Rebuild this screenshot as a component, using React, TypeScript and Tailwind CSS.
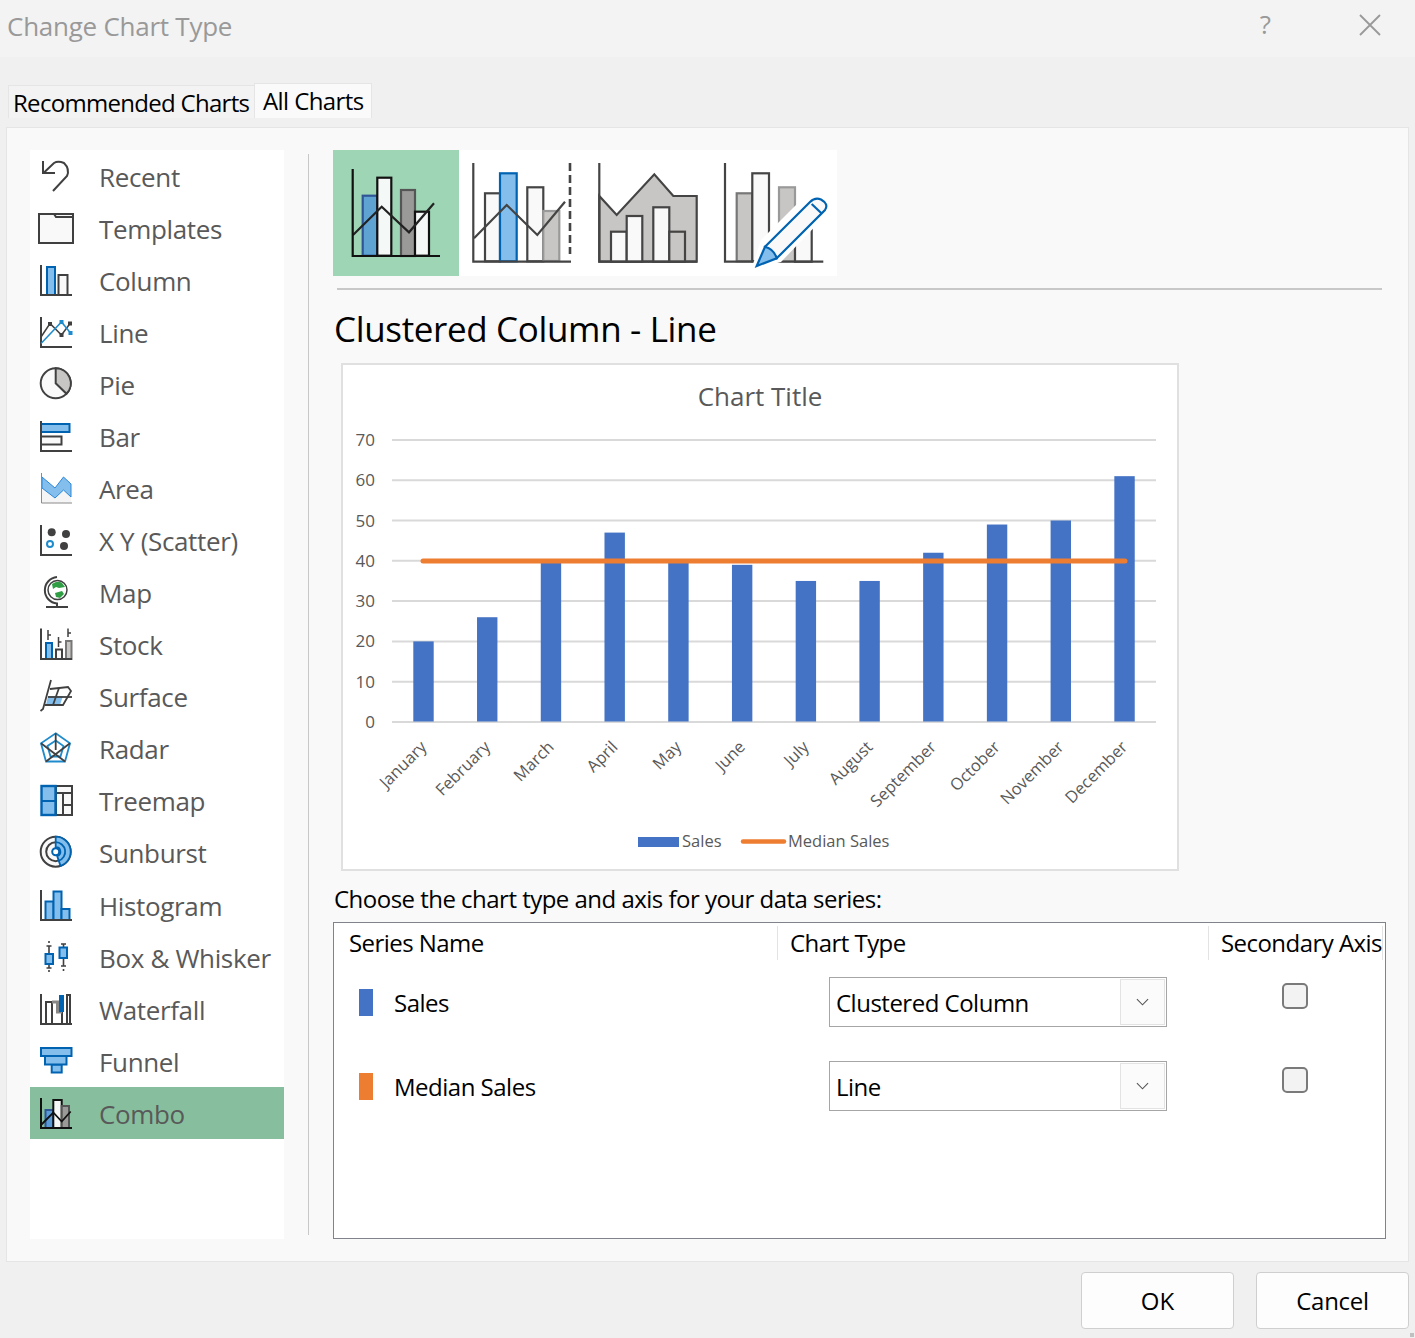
import React from 'react';

const DARK = '#404040';
const BLUE = '#0063b1';
const SKY = '#83beec';
const GRAY = '#c8c6c4';
const PALE = '#f9f9f9';

// bar with the bottom sitting on the axis
function Bar({ x1, x2, top, bottom = 33, fill = PALE, stroke = DARK, sw = 2 }: { x1: number; x2: number; top: number; bottom?: number; fill?: string; stroke?: string; sw?: number }) {
  return <rect x={x1} y={top} width={x2 - x1} height={bottom - top} fill={fill} stroke={stroke} strokeWidth={sw} />;
}

function Axis({ top = 3, color = DARK }: { top?: number; color?: string }) {
  return <path d={`M3 ${top} V33 H34`} fill="none" stroke={color} strokeWidth="2" />;
}

const icons: Record<string, React.ReactNode> = {
  Recent: (
    <g fill="none" stroke={DARK} strokeWidth="2">
      <path d="M5 3 V15 H17" />
      <path d="M5.5 15 L16 5 Q20 2.5 26 5 Q32 11 29 18 L15 33" />
    </g>
  ),
  Templates: (
    <g stroke={DARK} strokeWidth="2" fill={PALE}>
      <rect x="1" y="4" width="34" height="29" />
      <path d="M1 4 H16 L18 7 H35" />
    </g>
  ),
  Column: (
    <>
      <Bar x1={9} x2={17} top={5} fill={SKY} stroke={BLUE} />
      <Bar x1={20.5} x2={29.5} top={13} />
      <Axis />
    </>
  ),
  Line: (
    <>
      <Axis />
      <path d="M3 23 L12 9.5 L23.5 21 L32 9.5" fill="none" stroke={DARK} strokeWidth="1.5" />
      <rect x="10" y="8" width="4" height="4" fill={DARK} />
      <rect x="21.5" y="19" width="4" height="4" fill={DARK} />
      <rect x="30" y="7.5" width="4" height="4" fill={DARK} />
      <path d="M3 29.5 L23.5 8 L32.5 19" fill="none" stroke="#1e8bcd" strokeWidth="1.5" />
      <rect x="21.5" y="6" width="4" height="4" fill="#1e8bcd" />
      <rect x="30.5" y="17" width="4" height="4" fill="#1e8bcd" />
    </>
  ),
  Pie: (
    <>
      <circle cx="17.7" cy="17.3" r="15" fill={PALE} stroke={DARK} strokeWidth="2" />
      <path d="M17.7 2.3 A15 15 0 0 1 28.5 27.8 L17.7 17.3 Z" fill={GRAY} stroke={DARK} strokeWidth="2" />
    </>
  ),
  Bar: (
    <>
      <Bar x1={3} x2={31.5} top={6} bottom={14} fill={SKY} stroke={BLUE} />
      <Bar x1={3} x2={23.5} top={18.5} bottom={26.5} />
      <Axis />
    </>
  ),
  Area: (
    <>
      <path d="M4 18 L17 28 L25.5 20 L33 27 V33 H4 Z" fill="#f5f5f5" />
      <path d="M4 7 L17 18 L25.5 7 L33 14 V27 L25.5 20 L17 28 L4 18 Z" fill={SKY} stroke="#2b88d8" strokeWidth="1" />
      <path d="M3.5 3 V33 H34" fill="none" stroke="#8a8a8a" strokeWidth="1" />
    </>
  ),
  'X Y (Scatter)': (
    <>
      <Axis />
      <circle cx="13.7" cy="10.3" r="4" fill={DARK} />
      <circle cx="28" cy="12" r="4" fill={DARK} />
      <circle cx="26" cy="24" r="4" fill={DARK} />
      <circle cx="12" cy="22" r="3" fill="#fff" stroke="#1e8bcd" strokeWidth="2" />
    </>
  ),
  Map: (
    <>
      <circle cx="19.5" cy="16" r="9.5" fill="#fff" stroke={DARK} strokeWidth="1.5" />
      <path d="M14 10 Q20 6 24 9 L27 13 L21 14 L18 13 L15 15 Z" fill="#2f9e44" />
      <path d="M17 19 L24 17 L26 20 L22 24 L18 23 Z" fill="#2f9e44" />
      <path d="M19 3 A13.3 13.3 0 0 0 19 29.5 V33" fill="none" stroke={DARK} strokeWidth="2" />
      <path d="M8 33 H30" stroke={DARK} strokeWidth="2" />
    </>
  ),
  Stock: (
    <>
      <Bar x1={8} x2={14} top={17} fill={SKY} stroke={BLUE} />
      <Bar x1={18} x2={24} top={23.5} />
      <Bar x1={28} x2={33.5} top={15} fill={GRAY} stroke="#777" />
      <path d="M10 4 V14 M10 9 H13 M20.5 11 V21 M20.5 16 H23.5 M30 2.5 V11 M30 7 H33" stroke={DARK} strokeWidth="1.5" fill="none" />
      <Axis top={2.5} />
    </>
  ),
  Surface: (
    <>
      <path d="M10 18 H25 L22 27 H8 Z" fill={SKY} />
      <g fill="none" stroke={DARK} strokeWidth="1.8">
        <path d="M13 2 L5 31 L2.5 33" />
        <path d="M12 11 L30 9 L33 13 L25 27 H7" />
        <path d="M10 19 H34" />
        <path d="M21 10 L15 27" />
      </g>
    </>
  ),
  Radar: (
    <>
      <g fill="none" stroke="#1e8bcd" strokeWidth="1.8">
        <path d="M17.7 3.3 L32 13.3 L27 31.5 H8 L3 13.3 Z" />
        <path d="M17.7 10.5 L25.5 16 L22.5 26.5 H12.5 L9.5 16 Z" />
      </g>
      <path d="M17.7 3.3 V20 M3 13.3 L27 31.5 M32 13.3 L8 31.5" stroke={DARK} strokeWidth="1.8" fill="none" />
    </>
  ),
  Treemap: (
    <>
      <rect x="18" y="4" width="16" height="29" fill={PALE} stroke={DARK} strokeWidth="2" />
      <path d="M18 11 H34 M25 11 V33 M25 23 H34" stroke={DARK} strokeWidth="2" fill="none" />
      <rect x="3.5" y="4" width="14" height="29" fill={SKY} stroke={BLUE} strokeWidth="2.4" />
      <path d="M3.5 19 H17.5" stroke={BLUE} strokeWidth="2" />
    </>
  ),
  Sunburst: (
    <>
      <circle cx="17.7" cy="17.7" r="15" fill={PALE} stroke={DARK} strokeWidth="2" />
      <circle cx="17.7" cy="17.7" r="9.5" fill="none" stroke={DARK} strokeWidth="2" />
      <path d="M17.7 2.7 A15 15 0 0 1 22.5 31.9 L19.2 22 A4.5 4.5 0 0 0 17.7 13.2 Z" fill={SKY} stroke={BLUE} strokeWidth="1.8" />
      <path d="M17.7 8.2 A9.5 9.5 0 0 1 20.7 26.7" fill="none" stroke={BLUE} strokeWidth="1.8" />
      <circle cx="17.7" cy="17.7" r="3.5" fill="#fff" stroke={BLUE} strokeWidth="2" />
    </>
  ),
  Histogram: (
    <>
      <Bar x1={7.5} x2={15.5} top={14.5} fill={SKY} stroke={BLUE} />
      <Bar x1={15.5} x2={23.5} top={4.5} fill={SKY} stroke={BLUE} />
      <Bar x1={23.5} x2={31.5} top={22} fill={SKY} stroke={BLUE} />
      <Axis />
    </>
  ),
  'Box & Whisker': (
    <>
      <path d="M11 2 V4 M11 7 V15 M8.5 7 H13.5 M11 25 V29 M8.5 29 H13.5 M11 31 V33 M25.5 5 V8 M23 5 H28 M25.5 19 V27 M23 27 H28 M25.5 30 V32" stroke={DARK} strokeWidth="1.6" fill="none" />
      <rect x="7.5" y="15" width="7.5" height="10" fill={SKY} stroke={BLUE} strokeWidth="2" />
      <rect x="21.5" y="8.5" width="7.5" height="10.5" fill={SKY} stroke={BLUE} strokeWidth="2" />
    </>
  ),
  Waterfall: (
    <>
      <path d="M8 33 V11 H14 V33 M29 33 V4 H32 V33 M24 21 V33" fill="none" stroke={DARK} strokeWidth="2" />
      <path d="M14 11 H19.5 V21 H24" fill="none" stroke="#8a8886" strokeWidth="3" />
      <path d="M21 4 H26 V21 H21 Z" fill={BLUE} />
      <Axis />
    </>
  ),
  Funnel: (
    <g fill={SKY} stroke={BLUE} strokeWidth="2">
      <rect x="13.7" y="21.5" width="10" height="8" />
      <rect x="7" y="13" width="21.5" height="8.5" />
      <rect x="3" y="5" width="30.5" height="8" />
    </g>
  ),
  Combo: (
    <>
      <Bar x1={7.5} x2={15.3} top={15} fill="#5b9bd5" stroke="#2f5597" />
      <Bar x1={15.3} x2={23.7} top={5} fill="#f5f8f6" stroke="#111" />
      <Bar x1={23.7} x2={31} top={11} fill="#9a9a98" stroke="#555" />
      <path d="M3 30 L15.3 17.5 L23.7 26.5 L32.7 16.5" fill="none" stroke="#111" strokeWidth="1.8" />
      <Axis color="#111" />
    </>
  ),
};

const chartTypes = ['Recent', 'Templates', 'Column', 'Line', 'Pie', 'Bar', 'Area', 'X Y (Scatter)', 'Map', 'Stock', 'Surface', 'Radar', 'Treemap', 'Sunburst', 'Histogram', 'Box & Whisker', 'Waterfall', 'Funnel', 'Combo'];

function Sidebar() {
  return (
    <div className="w-[254px] h-[1089px] bg-white shrink-0">
      {chartTypes.map((name, i) => (
        <div key={name} className={`h-[52px] flex items-center pl-2 ${i === 14 ? 'mt-px' : ''} ${name === 'Combo' ? 'bg-[#87bf9e]' : ''}`}>
          <svg viewBox="0 0 36 36" className="w-9 h-9 shrink-0">{icons[name]}</svg>
          <span className="ml-[25px] pt-[2px] text-[26px] leading-none text-[#595959] whitespace-nowrap tracking-[-0.35px]">{name}</span>
        </div>
      ))}
    </div>
  );
}

function Thumb({ active, children }: { active?: boolean; children: React.ReactNode }) {
  return (
    <div className={`w-[126px] h-[126px] ${active ? 'bg-[#9ed5b5]' : 'bg-white'}`}>
      <svg viewBox="0 0 126 126" className="w-full h-full" fill="none" strokeWidth="2.2">{children}</svg>
    </div>
  );
}

function Thumbs() {
  const ink = '#444';
  return (
    <div className="flex">
      <Thumb active>
        <rect x="29.7" y="45.7" width="14.6" height="60" fill="#5fa3d3" stroke="#2f5597" />
        <rect x="44.3" y="27.7" width="14" height="78" fill="#f4f8f6" stroke="#111" />
        <rect x="68" y="40" width="14" height="66" fill="#9a9a98" stroke="#555" />
        <rect x="82" y="61.7" width="14" height="44" fill="#f4f8f6" stroke="#111" />
        <path d="M20 85 L48.7 56.7 L76 82.3 L101 53.3" stroke="#222" />
        <path d="M19.7 19 V106 H107" stroke="#111" />
      </Thumb>
      <Thumb>
        <rect x="26" y="43.3" width="15" height="68" fill={PALE} stroke={ink} />
        <rect x="41" y="23.3" width="16.7" height="88" fill={SKY} stroke={BLUE} />
        <rect x="68.3" y="37.3" width="16" height="74" fill={PALE} stroke={ink} />
        <rect x="84.3" y="61" width="16" height="50" fill={GRAY} stroke="#999" />
        <path d="M15 88.3 L47.7 55 L78.3 85 L106 51.7" stroke={ink} />
        <path d="M14.3 13 V111.7 H112" stroke={ink} />
        <path d="M111 13 V104" stroke={ink} strokeWidth="2.6" strokeDasharray="8 4" />
      </Thumb>
      <Thumb>
        <path d="M14.3 46 L31.7 65 L69.3 24.3 L88.3 46 H111.7 V111.7 H14.3 Z" fill={GRAY} stroke={ink} />
        <rect x="26" y="81.7" width="15.7" height="30" fill={PALE} stroke={ink} />
        <rect x="41.7" y="66" width="15.6" height="45.7" fill={PALE} stroke={ink} />
        <rect x="68.3" y="57.3" width="16" height="54.4" fill={PALE} stroke={ink} />
        <rect x="84.3" y="81.7" width="15.7" height="30" fill={GRAY} stroke={ink} />
        <path d="M14.3 13 V111.7 H112" stroke={ink} />
      </Thumb>
      <Thumb>
        <rect x="25.7" y="43.3" width="15.6" height="68" fill={GRAY} stroke="#777" />
        <rect x="41.3" y="23.3" width="16.7" height="88" fill={PALE} stroke={ink} />
        <rect x="68" y="37.3" width="16" height="74" fill={GRAY} stroke="#999" />
        <rect x="84" y="60" width="16.7" height="51.7" fill={PALE} stroke={ink} />
        <path d="M14 13 V111.7 H112.3" stroke={ink} />
        <path d="M40 120 L50 90 L97 43 L120 52 L118 62 L70 112 Z" fill="#fff" />
        <path d="M54 96.7 L99 52 Q104 47 110 49.5 Q118 54 114 60 L65.7 108.3 Z" fill={PALE} stroke={BLUE} />
        <path d="M100.7 54 L110.7 63.5" stroke={BLUE} />
        <path d="M54 96.7 Q63 99 65.7 108.3 L45.7 116 Z" fill={SKY} stroke={BLUE} />
      </Thumb>
    </div>
  );
}

const gridTicks = [70, 60, 50, 40, 30, 20, 10, 0];
const sales = [
  ['January', 20], ['February', 26], ['March', 40], ['April', 47], ['May', 40], ['June', 39],
  ['July', 35], ['August', 35], ['September', 42], ['October', 49], ['November', 50], ['December', 61],
] as const;

// chart coordinates are the screenshot's, 0 sits at y=722 and each unit is 4.03px
function Chart() {
  const y = (v: number) => 722 - v * 4.03;
  return (
    <div className="ml-2 w-[838px] h-[508px] bg-white border-2 border-[#e0e0e0] shrink-0">
      <svg viewBox="343 365 834 504" className="w-full h-full block" fontFamily="'Open Sans', sans-serif" fill="#595959">
        <text x="760" y="406" fontSize="26" textAnchor="middle">Chart Title</text>
        {gridTicks.map((t) => (
          <g key={t}>
            <line x1="392" x2="1156" y1={y(t)} y2={y(t)} stroke="#d9d9d9" strokeWidth="2" />
            <text x="375" y={y(t) + 6} fontSize="17" textAnchor="end">{t}</text>
          </g>
        ))}
        {sales.map(([name, v], i) => {
          const cx = 423.5 + i * 63.73;
          return (
            <g key={name}>
              <rect x={cx - 10.2} y={y(v)} width="20.4" height={721.5 - y(v)} fill="#4472c4" />
              <text transform={`translate(${cx + 4} 748) rotate(-45)`} fontSize="16.5" textAnchor="end">{name}</text>
            </g>
          );
        })}
        <line x1="423" x2="1125" y1="561" y2="561" stroke="#ed7d31" strokeWidth="5" strokeLinecap="round" />
        <rect x="638" y="837" width="41" height="10" fill="#4472c4" />
        <text x="682" y="847" fontSize="16.5">Sales</text>
        <line x1="743" x2="784" y1="841.5" y2="841.5" stroke="#ed7d31" strokeWidth="4.5" strokeLinecap="round" />
        <text x="788" y="847" fontSize="16.5">Median Sales</text>
      </svg>
    </div>
  );
}

function SeriesRow({ name, color, type }: { name: string; color: string; type: string }) {
  return (
    <div className="h-[84px] flex items-center text-[24px] tracking-[-0.5px]">
      <div className="w-[444px] flex items-center pl-[25px]">
        <span className={`w-[14px] h-[27px] ${color}`} />
        <span className="ml-[21px] pt-[2px]">{name}</span>
      </div>
      <div className="w-[431px] pl-[51px]">
        <div className="w-[338px] h-[50px] border border-[#a6a6a6] bg-white flex items-center justify-between pl-[6px] pr-px">
          <span className="pt-[2px]">{type}</span>
          <div className="w-[45px] h-[46px] border border-[#e3e3e3] bg-[#fbfbfb] flex items-center justify-center">
            <svg viewBox="0 0 14 8" className="w-[13px] h-2" fill="none" stroke="#555" strokeWidth="1.2"><path d="M1 1 L7 7 L13 1" /></svg>
          </div>
        </div>
      </div>
      <div className="pl-[73px] pb-3">
        <div className="w-[26px] h-[26px] rounded-[5px] border-2 border-[#7a7a7a] bg-[#f3f3f3]" />
      </div>
    </div>
  );
}

function SeriesTable() {
  return (
    <div className="w-[1053px] h-[317px] border border-[#80848a] bg-white shrink-0">
      <div className="flex pt-[3px] text-[24px] tracking-[-0.55px] text-black">
        <div className="w-[444px] h-[34px] border-r border-[#e3e3e3] pl-[15px] flex items-center">Series Name</div>
        <div className="w-[431px] h-[34px] border-r border-[#e3e3e3] pl-3 flex items-center">Chart Type</div>
        <div className="w-[174px] h-[34px] border-r border-[#e3e3e3] pl-3 flex items-center whitespace-nowrap">Secondary Axis</div>
      </div>
      <SeriesRow name="Sales" color="bg-[#4472c4]" type="Clustered Column" />
      <SeriesRow name="Median Sales" color="bg-[#ed7d31]" type="Line" />
    </div>
  );
}

export default function App() {
  return (
    <div className="w-[1415px] h-[1338px] bg-[#f0f0f0] flex flex-col overflow-hidden relative text-black font-['Open_Sans',sans-serif]">
      <div className="h-[57px] bg-[#f3f3f3] flex items-center justify-between pl-[7px] shrink-0">
        <span className="pb-1 text-[26px] text-[#999] tracking-[-0.25px]">Change Chart Type</span>
        <div className="flex items-center pb-2">
          <span className="text-[26px] text-[#999] mr-[88px]">?</span>
          <svg viewBox="0 0 22 22" className="w-[22px] h-[22px] mr-[34px]" stroke="#999" strokeWidth="1.8"><path d="M1 1 L21 21 M21 1 L1 21" /></svg>
        </div>
      </div>
      <div className="h-[61px] mb-[9px] pl-2 pt-[26px] flex items-start shrink-0">
        <div className="w-[246px] h-[33px] mt-[2px] border-l border-t border-[#e5e5e5] bg-[#f3f3f3] pl-[4px] text-[24px] tracking-[-0.7px] leading-[34px] whitespace-nowrap">Recommended Charts</div>
        <div className="w-[118px] h-[35px] border border-b-0 border-[#e5e5e5] bg-[#fafafa] pl-2 text-[24px] tracking-[-0.6px] leading-[34px] whitespace-nowrap">All Charts</div>
      </div>

      <div className="mx-[6px] h-[1135px] border border-[#e5e5e5] bg-[#f9f9f9] flex pl-[23px] pt-[22px] shrink-0">
        <Sidebar />
        <div className="ml-6 mt-1 w-px h-[1081px] bg-[#c8c8c8]" />
        <div className="ml-6 flex flex-col">
          <Thumbs />
          <div className="ml-1 mt-[12px] w-[1045px] h-[2px] bg-[#c8c8c8]" />
          <div className="h-[73px] flex items-center pl-px pt-[6px] text-[35px] tracking-[-0.35px]">Clustered Column - Line</div>
          <Chart />
          <div className="h-[51px] pt-[10px] pl-px text-[24px] tracking-[-0.52px] whitespace-nowrap">Choose the chart type and axis for your data series:</div>
          <SeriesTable />
        </div>
      </div>

      <div className="flex justify-end gap-[22px] pr-[6px] pt-[10px]">
        <button className="w-[153px] h-[57px] rounded border border-[#cfcfcf] bg-[#fdfdfd] text-[24px]">OK</button>
        <button className="w-[153px] h-[57px] rounded border border-[#cfcfcf] bg-[#fdfdfd] text-[24px] tracking-[-0.3px]">Cancel</button>
      </div>
      <div className="absolute right-[1px] bottom-[1px] w-[4px] h-[4px] bg-[#c0c0c0]" />
    </div>
  );
}
